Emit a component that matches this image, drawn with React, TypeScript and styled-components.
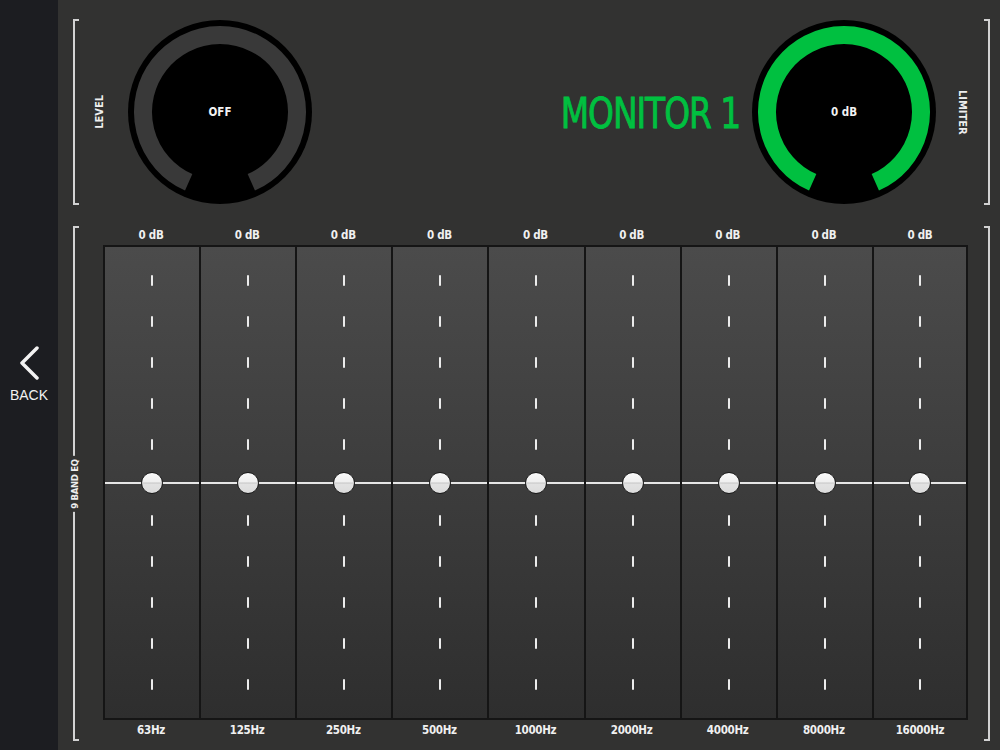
import React from "react";
import styled, { createGlobalStyle } from "styled-components";

const GREEN = "#00c040";

const GlobalStyle = createGlobalStyle`
  html, body {
    margin: 0;
    padding: 0;
    background: #323232;
  }
  body {
    font-family: "DejaVu Sans Condensed", "DejaVu Sans", sans-serif;
    font-stretch: condensed;
  }
`;

const bands = [
  "63Hz",
  "125Hz",
  "250Hz",
  "500Hz",
  "1000Hz",
  "2000Hz",
  "4000Hz",
  "8000Hz",
  "16000Hz",
];

// arc of the dial: radius 77, gap of 24deg either side of straight down
const arcPath = (() => {
  const c = 92;
  const r = 77;
  const a1 = ((90 + 24) * Math.PI) / 180;
  const a2 = ((90 - 24) * Math.PI) / 180;
  const x1 = c + r * Math.cos(a1);
  const y1 = c + r * Math.sin(a1);
  const x2 = c + r * Math.cos(a2);
  const y2 = c + r * Math.sin(a2);
  return `M ${x1} ${y1} A ${r} ${r} 0 1 1 ${x2} ${y2}`;
})();

const Dial: React.FC<{ value: string; active?: boolean; gap: number }> = ({ value, active, gap }) => (
  <DialWrap $gap={gap}>
    <svg width="184" height="184" viewBox="0 0 184 184">
      <circle cx="92" cy="92" r="92" fill="#000" />
      <path d={arcPath} fill="none" stroke={active ? GREEN : "#393939"} strokeWidth="18" />
    </svg>
    <DialValue>{value}</DialValue>
  </DialWrap>
);

const Band: React.FC<{ freq: string; last: boolean }> = ({ freq, last }) => (
  <BandCol>
    <BandLabel>0 dB</BandLabel>
    <Track $last={last}>
      <TickGroup>
        {[0, 1, 2, 3, 4].map((i) => (
          <Tick key={i} />
        ))}
      </TickGroup>
      <FaderRow>
        <FaderLine />
        <FaderKnob />
      </FaderRow>
      <TickGroup>
        {[0, 1, 2, 3, 4].map((i) => (
          <Tick key={i} />
        ))}
      </TickGroup>
    </Track>
    <BandLabel>{freq}</BandLabel>
  </BandCol>
);

const App: React.FC = () => {
  return (
    <Screen>
      <GlobalStyle />
      <Sidebar>
        <BackButton>
          <svg width="20" height="34" viewBox="0 0 20 34">
            <polyline
              points="18,2 3,17 18,32"
              fill="none"
              stroke="#f2f2f2"
              strokeWidth="3.5"
              strokeLinecap="round"
              strokeLinejoin="round"
            />
          </svg>
          <BackText>BACK</BackText>
        </BackButton>
      </Sidebar>
      <Main>
        <TopSection>
          <Bracket $side="left" />
          <SideLabel $dir="up">LEVEL</SideLabel>
          <Dial value="OFF" gap={22} />
          <Spacer />
          <Title>MONITOR 1</Title>
          <Dial value="0 dB" active gap={12} />
          <SideLabel $dir="down">LIMITER</SideLabel>
          <Bracket $side="right" />
        </TopSection>
        <EqSection>
          <Bracket $side="left">
            <BracketLabel>9 BAND EQ</BracketLabel>
          </Bracket>
          <Bands>
            {bands.map((f, i) => (
              <Band key={f} freq={f} last={i === bands.length - 1} />
            ))}
          </Bands>
          <Bracket $side="right" />
        </EqSection>
      </Main>
    </Screen>
  );
};

const Screen = styled.div`
  display: flex;
  width: 1000px;
  height: 750px;
  overflow: hidden;
`;

const Sidebar = styled.div`
  width: 58px;
  flex-shrink: 0;
  background: #1c1d21;
  display: flex;
  align-items: center;
  justify-content: center;
`;

const BackButton = styled.div`
  display: flex;
  flex-direction: column;
  align-items: center;
  padding-bottom: 2px;
  cursor: pointer;
  svg {
    display: block;
  }
`;

const BackText = styled.div`
  margin-top: 7px;
  font-family: "Liberation Sans", Arial, sans-serif;
  font-stretch: normal;
  font-size: 14px;
  line-height: 16px;
  color: #f2f2f2;
`;

const Main = styled.div`
  flex: 1;
  display: flex;
  flex-direction: column;
  background: #323231;
  padding: 19px 10px 9px 15px;
`;

const TopSection = styled.div`
  display: flex;
  align-items: center;
  height: 186px;
`;

const EqSection = styled.div`
  flex: 1;
  display: flex;
  margin-top: 21px;
`;

const Bracket = styled.div<{ $side: "left" | "right" }>`
  position: relative;
  align-self: stretch;
  width: 6px;
  flex-shrink: 0;
  box-sizing: border-box;
  border: 2px solid #d2d2d2;
  ${(p) => (p.$side === "left" ? "border-right: none;" : "border-left: none;")}
  ${(p) => (p.$side === "right" ? "margin-left: 16px;" : "")}
`;

const BracketLabel = styled.div`
  position: absolute;
  left: -1px;
  top: 50%;
  transform: translate(-50%, -50%) rotate(180deg);
  writing-mode: vertical-rl;
  background: #323231;
  padding: 3px 0;
  font-size: 9.5px;
  font-weight: bold;
  letter-spacing: -0.3px;
  line-height: 11px;
  color: #eeeeee;
  white-space: nowrap;
`;

const SideLabel = styled.div<{ $dir: "up" | "down" }>`
  writing-mode: vertical-rl;
  transform: ${(p) => (p.$dir === "up" ? "rotate(180deg)" : "none")};
  margin-left: ${(p) => (p.$dir === "up" ? "15px" : "20px")};
  font-size: 11px;
  line-height: 12px;
  font-weight: bold;
  color: #eeeeee;
`;

const DialWrap = styled.div<{ $gap: number }>`
  position: relative;
  width: 184px;
  height: 184px;
  flex-shrink: 0;
  margin-left: ${(p) => p.$gap}px;
  svg {
    display: block;
  }
`;

const DialValue = styled.div`
  position: absolute;
  inset: 0;
  display: flex;
  align-items: center;
  justify-content: center;
  padding-bottom: 1px;
  font-size: 11.5px;
  font-weight: bold;
  color: #f2f2f2;
`;

const Spacer = styled.div`
  flex: 1;
`;

const Title = styled.div`
  margin-top: 3px;
  font-family: "DejaVu Sans Condensed", "DejaVu Sans", sans-serif;
  font-size: 42px;
  line-height: 48px;
  letter-spacing: -1.2px;
  color: ${GREEN};
  -webkit-text-stroke: 0.8px ${GREEN};
  white-space: nowrap;
  transform: scaleX(0.87);
  transform-origin: right center;
`;

const Bands = styled.div`
  flex: 1;
  display: grid;
  grid-template-columns: repeat(9, 1fr);
  margin-left: 24px;
`;

const BandCol = styled.div`
  display: flex;
  flex-direction: column;
  min-width: 0;
`;

const BandLabel = styled.div`
  height: 19px;
  line-height: 19px;
  text-align: center;
  font-size: 11.5px;
  font-weight: bold;
  letter-spacing: -0.3px;
  color: #f0f0f0;
  &:last-child {
    height: 21px;
    line-height: 21px;
  }
`;

const Track = styled.div<{ $last: boolean }>`
  flex: 1;
  display: flex;
  flex-direction: column;
  justify-content: space-between;
  padding: 28px 0;
  border-top: 2px solid #151515;
  border-bottom: 2px solid #151515;
  border-left: 2px solid #151515;
  border-right: ${(p) => (p.$last ? "2px solid #151515" : "none")};
  background: linear-gradient(#4b4b4b, #2e2e2e);
`;

const TickGroup = styled.div`
  display: flex;
  flex-direction: column;
  align-items: center;
  gap: 30px;
`;

const Tick = styled.div`
  width: 2px;
  height: 11px;
  border-radius: 1px;
  background: #ececec;
`;

const FaderRow = styled.div`
  flex: 1;
  position: relative;
  display: flex;
  align-items: center;
`;

const FaderLine = styled.div`
  width: 100%;
  height: 2px;
  background: #e6e6e6;
`;

const FaderKnob = styled.div`
  position: absolute;
  left: 50%;
  top: 50%;
  width: 22px;
  height: 22px;
  box-sizing: border-box;
  transform: translate(-50%, -50%);
  border-radius: 50%;
  border: 1.5px solid #1a1a1a;
  background: linear-gradient(#fafafa 0%, #efefef 46%, #b9b9b9 50%, #e2e2e2 54%, #dcdcdc 100%);
`;

export default App;
